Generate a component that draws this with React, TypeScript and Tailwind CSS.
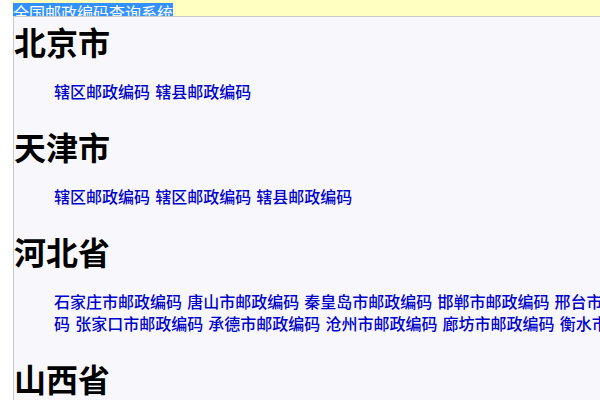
const regions: { name: string; links: string[] }[] = [
  { name: "北京市", links: ["辖区邮政编码", "辖县邮政编码"] },
  { name: "天津市", links: ["辖区邮政编码", "辖区邮政编码", "辖县邮政编码"] },
  {
    name: "河北省",
    links: [
      "石家庄市邮政编码",
      "唐山市邮政编码",
      "秦皇岛市邮政编码",
      "邯郸市邮政编码",
      "邢台市邮政编|码",
      "张家口市邮政编码",
      "承德市邮政编码",
      "沧州市邮政编码",
      "廊坊市邮政编码",
      "衡水市邮政编码",
    ],
  },
  {
    name: "山西省",
    links: ["太原市邮政编码", "大同市邮政编码", "阳泉市邮政编码", "长治市邮政编码"],
  },
];

// "|" marks where the original page wrapped the line
function LinkText({ text }: { text: string }) {
  const [a, b] = text.split("|");
  if (b === undefined) return <>{a}</>;
  return (
    <>
      {a}
      <br />
      {b}
    </>
  );
}

export default function App() {
  return (
    <div
      className="w-[600px] h-[400px] overflow-hidden bg-white pl-[13px]"
      style={{ fontFamily: '"Noto Sans CJK SC", "Noto Sans", sans-serif' }}
    >
      <div className="w-[720px]">
        <div className="h-4 bg-[#ffffc0] border-b border-[#c8c8c8] box-content overflow-hidden">
          <span className="inline-block -mt-[3px] bg-[#3390ff] text-white text-base leading-[18px]">
            全国邮政编码查询系统
          </span>
        </div>
        <div className="border-l border-[#c8c8c8] bg-[#f8f8fc] pt-2 min-h-[400px]">
          {regions.map((r) => (
            <section key={r.name}>
              <h1 className="text-[32px] leading-8 font-bold text-black">{r.name}</h1>
              <p className="mt-[23px] mb-[28px] pl-10 text-base leading-[22px] font-medium [word-spacing:1.5px]">
                {r.links.map((l, i) => (
                  <span key={i}>
                    <a href="#" className="text-[#0000cc]">
                      <LinkText text={l} />
                    </a>
                    {i < r.links.length - 1 ? " " : ""}
                  </span>
                ))}
              </p>
            </section>
          ))}
        </div>
      </div>
    </div>
  );
}
